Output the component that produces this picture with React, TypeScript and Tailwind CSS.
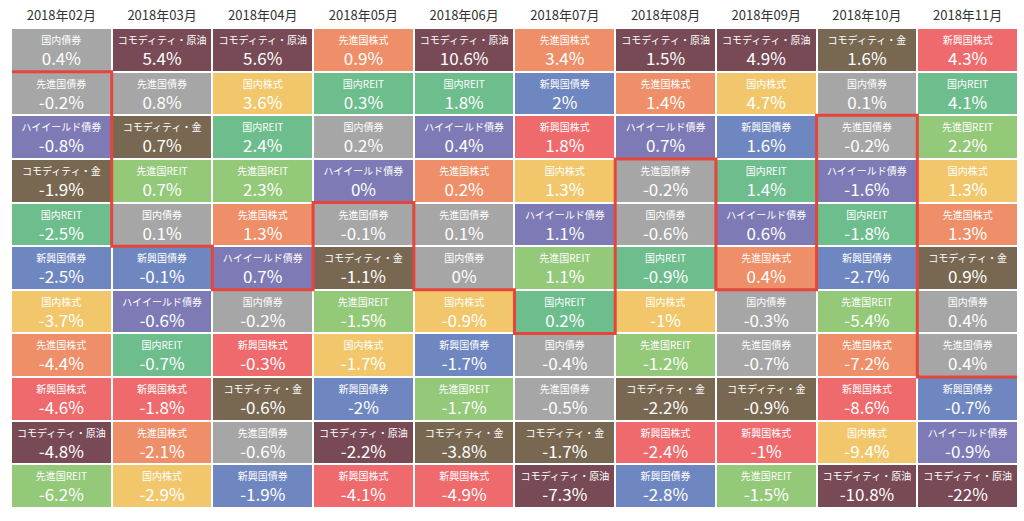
import React from 'react';

// asset class -> cell colour
const COLORS: Record<string, string> = {
  '国内債券': 'bg-[#a6a6a6]',
  '先進国債券': 'bg-[#a6a6a6]',
  'コモディティ・原油': 'bg-[#784a55]',
  'コモディティ・金': 'bg-[#786851]',
  '先進国株式': 'bg-[#ef8f69]',
  '国内REIT': 'bg-[#6dbd8d]',
  '先進国REIT': 'bg-[#93c979]',
  '新興国債券': 'bg-[#6f87c0]',
  'ハイイールド債券': 'bg-[#7e7ab5]',
  '新興国株式': 'bg-[#ef6a6d]',
  '国内株式': 'bg-[#f2c76b]',
};

type Cell = [string, string];

const MONTHS: { label: string; cells: Cell[] }[] = [
  {
    label: '2018年02月',
    cells: [
      ['国内債券', '0.4%'], ['先進国債券', '-0.2%'], ['ハイイールド債券', '-0.8%'], ['コモディティ・金', '-1.9%'],
      ['国内REIT', '-2.5%'], ['新興国債券', '-2.5%'], ['国内株式', '-3.7%'], ['先進国株式', '-4.4%'],
      ['新興国株式', '-4.6%'], ['コモディティ・原油', '-4.8%'], ['先進国REIT', '-6.2%'],
    ],
  },
  {
    label: '2018年03月',
    cells: [
      ['コモディティ・原油', '5.4%'], ['先進国債券', '0.8%'], ['コモディティ・金', '0.7%'], ['先進国REIT', '0.7%'],
      ['国内債券', '0.1%'], ['新興国債券', '-0.1%'], ['ハイイールド債券', '-0.6%'], ['国内REIT', '-0.7%'],
      ['新興国株式', '-1.8%'], ['先進国株式', '-2.1%'], ['国内株式', '-2.9%'],
    ],
  },
  {
    label: '2018年04月',
    cells: [
      ['コモディティ・原油', '5.6%'], ['国内株式', '3.6%'], ['国内REIT', '2.4%'], ['先進国REIT', '2.3%'],
      ['先進国株式', '1.3%'], ['ハイイールド債券', '0.7%'], ['国内債券', '-0.2%'], ['新興国株式', '-0.3%'],
      ['コモディティ・金', '-0.6%'], ['先進国債券', '-0.6%'], ['新興国債券', '-1.9%'],
    ],
  },
  {
    label: '2018年05月',
    cells: [
      ['先進国株式', '0.9%'], ['国内REIT', '0.3%'], ['国内債券', '0.2%'], ['ハイイールド債券', '0%'],
      ['先進国債券', '-0.1%'], ['コモディティ・金', '-1.1%'], ['先進国REIT', '-1.5%'], ['国内株式', '-1.7%'],
      ['新興国債券', '-2%'], ['コモディティ・原油', '-2.2%'], ['新興国株式', '-4.1%'],
    ],
  },
  {
    label: '2018年06月',
    cells: [
      ['コモディティ・原油', '10.6%'], ['国内REIT', '1.8%'], ['ハイイールド債券', '0.4%'], ['先進国株式', '0.2%'],
      ['先進国債券', '0.1%'], ['国内債券', '0%'], ['国内株式', '-0.9%'], ['新興国債券', '-1.7%'],
      ['先進国REIT', '-1.7%'], ['コモディティ・金', '-3.8%'], ['新興国株式', '-4.9%'],
    ],
  },
  {
    label: '2018年07月',
    cells: [
      ['先進国株式', '3.4%'], ['新興国債券', '2%'], ['新興国株式', '1.8%'], ['国内株式', '1.3%'],
      ['ハイイールド債券', '1.1%'], ['先進国REIT', '1.1%'], ['国内REIT', '0.2%'], ['国内債券', '-0.4%'],
      ['先進国債券', '-0.5%'], ['コモディティ・金', '-1.7%'], ['コモディティ・原油', '-7.3%'],
    ],
  },
  {
    label: '2018年08月',
    cells: [
      ['コモディティ・原油', '1.5%'], ['先進国株式', '1.4%'], ['ハイイールド債券', '0.7%'], ['先進国債券', '-0.2%'],
      ['国内債券', '-0.6%'], ['国内REIT', '-0.9%'], ['国内株式', '-1%'], ['先進国REIT', '-1.2%'],
      ['コモディティ・金', '-2.2%'], ['新興国株式', '-2.4%'], ['新興国債券', '-2.8%'],
    ],
  },
  {
    label: '2018年09月',
    cells: [
      ['コモディティ・原油', '4.9%'], ['国内株式', '4.7%'], ['新興国債券', '1.6%'], ['国内REIT', '1.4%'],
      ['ハイイールド債券', '0.6%'], ['先進国株式', '0.4%'], ['国内債券', '-0.3%'], ['先進国債券', '-0.7%'],
      ['コモディティ・金', '-0.9%'], ['新興国株式', '-1%'], ['先進国REIT', '-1.5%'],
    ],
  },
  {
    label: '2018年10月',
    cells: [
      ['コモディティ・金', '1.6%'], ['国内債券', '0.1%'], ['先進国債券', '-0.2%'], ['ハイイールド債券', '-1.6%'],
      ['国内REIT', '-1.8%'], ['新興国債券', '-2.7%'], ['先進国REIT', '-5.4%'], ['先進国株式', '-7.2%'],
      ['新興国株式', '-8.6%'], ['国内株式', '-9.4%'], ['コモディティ・原油', '-10.8%'],
    ],
  },
  {
    label: '2018年11月',
    cells: [
      ['新興国株式', '4.3%'], ['国内REIT', '4.1%'], ['先進国REIT', '2.2%'], ['国内株式', '1.3%'],
      ['先進国株式', '1.3%'], ['コモディティ・金', '0.9%'], ['国内債券', '0.4%'], ['先進国債券', '0.4%'],
      ['新興国債券', '-0.7%'], ['ハイイールド債券', '-0.9%'], ['コモディティ・原油', '-22%'],
    ],
  },
];

// red divider, in (column boundary, row boundary) steps
const PATH: [number, number][] = [
  [0, 1], [1, 1], [1, 5], [2, 5], [2, 6], [3, 6], [3, 4], [4, 4], [4, 6], [5, 6],
  [5, 7], [6, 7], [6, 3], [7, 3], [7, 6], [8, 6], [8, 2], [9, 2], [9, 8], [10, 8],
];

const W = 1005;
const H = 478;
const GAP = 2;

const px = (c: number) => (c === 0 ? 0 : c === 10 ? W : (c * (W + GAP)) / 10 - GAP / 2);
const py = (r: number) => (r === 0 ? 0 : r === 11 ? H : (r * (H + GAP)) / 11 - GAP / 2);

const FONT = { fontFamily: '"Noto Sans CJK JP", "Noto Sans", sans-serif' };

export default function App() {
  const points = PATH.map(([c, r]) => `${px(c)},${py(r)}`).join(' ');

  return (
    <div className="w-[1024px] h-[521px] bg-white overflow-hidden" style={FONT}>
      <div className="ml-[12px] w-[1005px]">
        <div className="grid grid-cols-10 gap-x-[2px] h-[29px]">
          {MONTHS.map(m => (
            <div key={m.label} className="flex items-center justify-center text-[13px] text-[#333] pt-[1px]">
              {m.label}
            </div>
          ))}
        </div>

        <div className="relative h-[478px]">
          <div className="grid grid-cols-10 gap-[2px] h-full">
            {MONTHS.map(m => (
              <div key={m.label} className="grid grid-rows-11 gap-[2px]">
                {m.cells.map(([name, value], i) => (
                  <div
                    key={i}
                    className={`${COLORS[name]} flex flex-col items-center text-white leading-none`}
                  >
                    <span className="text-[10px] mt-[6px] whitespace-nowrap">{name}</span>
                    <span className="text-[17px] mt-[4px]">{value}</span>
                  </div>
                ))}
              </div>
            ))}
          </div>

          <svg
            className="absolute inset-0 pointer-events-none"
            width={W}
            height={H}
            viewBox={`0 0 ${W} ${H}`}
          >
            <polyline points={points} fill="none" stroke="#e5453a" strokeWidth="3" strokeLinejoin="miter" />
          </svg>
        </div>
      </div>
    </div>
  );
}
